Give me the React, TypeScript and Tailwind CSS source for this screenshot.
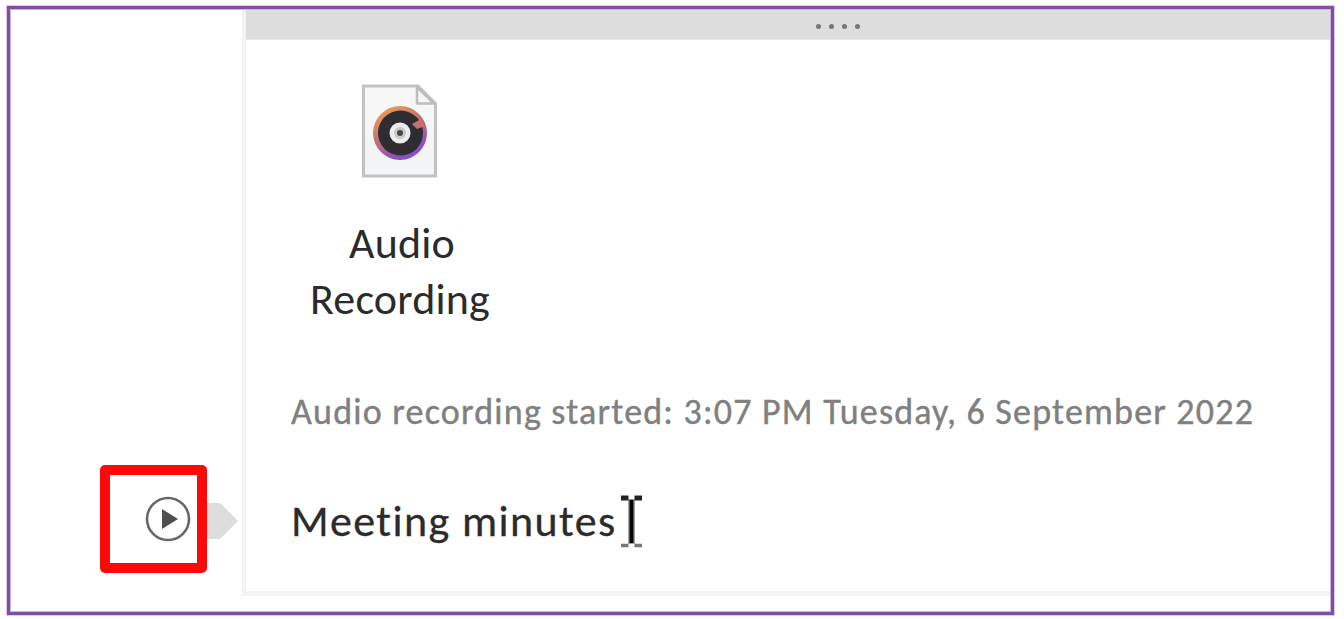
function FileIcon() {
  return (
    <svg className="block h-[96px] w-[78px]" viewBox="0 0 78 96" fill="none">
      <defs>
        <linearGradient id="rim" x1="0.2" y1="0" x2="0.75" y2="1">
          <stop offset="0.1" stopColor="#e8965a" />
          <stop offset="0.45" stopColor="#c07070" />
          <stop offset="0.85" stopColor="#8a4fc4" />
        </linearGradient>
        <linearGradient id="sheet" x1="0" y1="0" x2="0" y2="1">
          <stop offset="0" stopColor="#f7f7f7" />
          <stop offset="1" stopColor="#f3f4f6" />
        </linearGradient>
      </defs>
      <path d="M2.5 3H57L74.5 20.5V93H2.5Z" fill="url(#sheet)" stroke="#c2c2c2" strokeWidth="3" />
      <path d="M56 4V20.5H73Z" fill="#f4f4f4" stroke="#bdbdbd" strokeWidth="2.5" strokeLinejoin="round" />
      <circle cx="39" cy="50" r="27" fill="url(#rim)" />
      <circle cx="39.5" cy="50" r="22.5" fill="#2f2d31" />
      <path d="M51 41l9-5 4 7-8 3z" fill="#c96f70" />
      <circle cx="39" cy="50" r="10.5" fill="#ececec" />
      <circle cx="39" cy="50" r="6" fill="#c8c8c8" />
      <circle cx="39" cy="50" r="3" fill="#4a4a4a" />
    </svg>
  );
}

function PlayIcon() {
  return (
    <svg className="block h-[46px] w-[46px] shrink-0" viewBox="0 0 46 46" fill="none">
      <circle cx="23" cy="23" r="21" stroke="#666666" strokeWidth="2.6" />
      <path d="M17 13L33 23L17 33Z" fill="#4f4f4f" />
    </svg>
  );
}

function TextCursor() {
  return (
    <svg className="block h-[54px] w-[23px] shrink-0" viewBox="0 0 23 54" fill="none">
      <path d="M1 4H8.5M14.5 4H22" stroke="#222" strokeWidth="5" />
      <path d="M8 6.5H15M8 48H15" stroke="#777" strokeWidth="2.5" />
      <path d="M1 51.5H8.5M14.5 51.5H22" stroke="#777" strokeWidth="3.5" />
      <path d="M11.5 7V50" stroke="#a5a5a5" strokeWidth="7" />
      <path d="M11.5 6V49" stroke="#050505" strokeWidth="4" />
    </svg>
  );
}

export default function App() {
  return (
    <main className="h-[619px] w-[1344px] overflow-hidden bg-white pl-[7px] pt-[6px] font-['Carlito','Lato',sans-serif] [font-variant-ligatures:none]">
      <div className="flex h-[609px] w-[1327px] border-[3px] border-[#7c4fa0] shadow-[0_0_0_1px_#dcc8ea,inset_0_0_0_1px_#cdb2df]">
        <aside className="w-[232px] shrink-0 pl-[90px] pt-[456px]">
          <div className="flex items-center">
            <div className="flex h-[108px] w-[107px] shrink-0 items-center rounded-[5px] border-[10px] border-[#fe0808] pl-[35px]">
              <PlayIcon />
            </div>
            <svg className="mt-[4px] block h-[36px] w-[31px] shrink-0" viewBox="0 0 31 36">
              <path d="M0 0H13L31 18L13 36H0Z" fill="#dddddd" />
            </svg>
          </div>
        </aside>
        <section className="mt-px mr-px flex h-[586px] grow flex-col border-b-[5px] border-l-[4px] border-[#f3f3f3]">
          <header className="flex h-[30px] shrink-0 items-center justify-center gap-[8px] border-b border-[#e4e8eb] bg-[#dddddd] pl-[100px] pt-[4px]">
            <i className="size-[5px] rounded-full bg-[#777]" />
            <i className="size-[5px] rounded-full bg-[#777]" />
            <i className="size-[5px] rounded-full bg-[#777]" />
            <i className="size-[5px] rounded-full bg-[#777]" />
          </header>
          <div className="flex flex-col pl-[45px]">
            <figure className="flex w-[218px] flex-col items-center pt-[43px]">
              <FileIcon />
              <figcaption className="mt-[36px] text-center text-[44px] leading-[56px] tracking-[0.2px] text-[#2b2b2b]">
                <div className="pl-[4px]">Audio</div>
                <div>Recording</div>
              </figcaption>
            </figure>
            <p className="mt-[61px] whitespace-nowrap text-[36px] leading-[48px] tracking-[1.2px] text-[#808080] [-webkit-text-stroke:0.4px_#808080]">
              <span>Audio recording started: 3:07 PM Tuesday, 6 September 2022</span>
            </p>
            <div className="mt-[57px] flex items-center">
              <p className="w-[329px] whitespace-nowrap text-[44px] leading-[56px] tracking-[1.4px] text-[#2b2b2b] [-webkit-text-stroke:0.3px_#2b2b2b]">
                <span>Meeting minutes</span>
              </p>
              <TextCursor />
            </div>
          </div>
        </section>
      </div>
    </main>
  );
}
